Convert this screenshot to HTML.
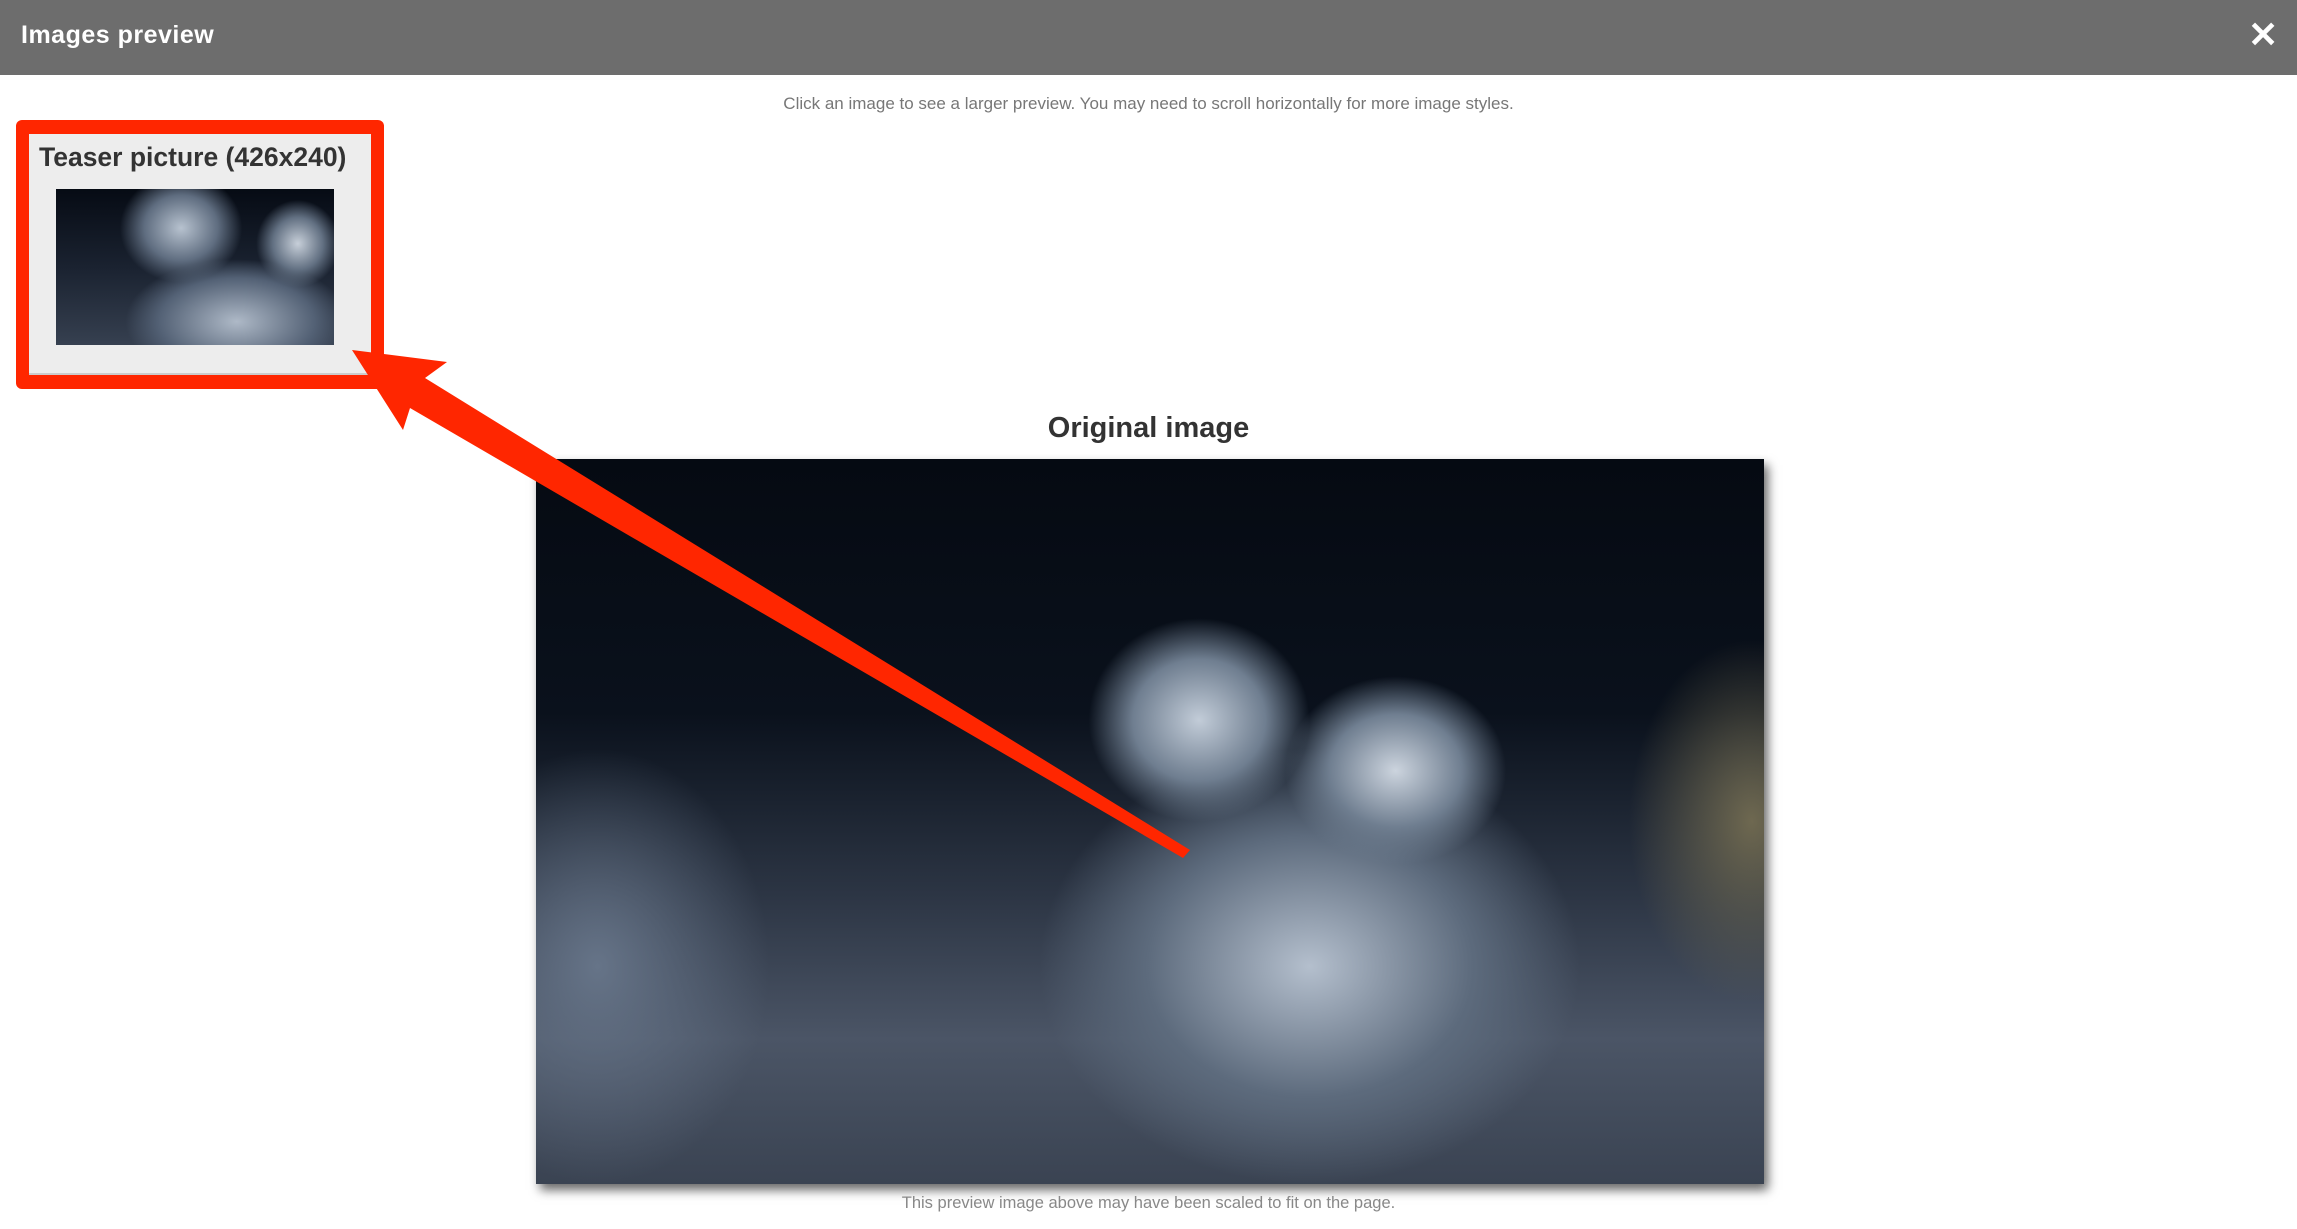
<!DOCTYPE html>
<html><head><meta charset="utf-8"><style>
html,body{margin:0;padding:0;width:2297px;height:1229px;overflow:hidden;background:#fff;font-family:"Liberation Sans",sans-serif;position:relative}
.hdr{position:absolute;left:0;top:0;width:2297px;height:75px;background:#6d6d6d}
.hdr .t{position:absolute;left:21px;top:21px;color:#fff;font-weight:bold;font-size:25px;letter-spacing:.5px}
.hdr .x{position:absolute;left:2248px;top:14px;color:#fff;font-weight:bold;font-size:36px}
.ins{position:absolute;top:94px;left:0;width:2297px;text-align:center;color:#777;font-size:17px}
.red{position:absolute;left:16px;top:120px;width:368px;height:269px;background:#ff2600;border-radius:6px}
.panel{position:absolute;left:29px;top:134px;width:342px;height:241px;background:#ededed;border-bottom:2px solid #ccc;box-sizing:border-box}
.panel .tt{position:absolute;left:10px;top:8px;font-size:26.5px;font-weight:bold;color:#333}
.img{background:
 radial-gradient(ellipse 9% 14% at 54% 36%,#c2ccd8 0,#6f7e90 60%,transparent 100%),
 radial-gradient(ellipse 9% 13% at 70% 43%,#ccd4de 0,#6f7e90 60%,transparent 100%),
 radial-gradient(ellipse 22% 30% at 63% 70%,#b4bfcd 0,#5d6b7d 60%,transparent 100%),
 radial-gradient(ellipse 10% 25% at 99% 50%,#6e6850 0,transparent 100%),
 radial-gradient(ellipse 14% 30% at 5% 70%,#667488 0,transparent 100%),
 linear-gradient(180deg,#050a12 0,#0a111c 35%,#2c3544 60%,#4b5566 80%,#3a4352 100%);}
.thumb{position:absolute;left:56px;top:189px;width:278px;height:156px;background:
 radial-gradient(ellipse 22% 35% at 45% 25%,#b7c2cf 0,#5f6d80 60%,transparent 100%),
 radial-gradient(ellipse 15% 28% at 87% 35%,#c7cfd9 0,#627082 60%,transparent 100%),
 radial-gradient(ellipse 40% 40% at 65% 85%,#aeb9c7 0,#536175 70%,transparent 100%),
 linear-gradient(180deg,#060b14 0,#1a2230 50%,#364050 100%)}
.orig{position:absolute;top:412px;left:0;width:2297px;text-align:center;font-size:29px;font-weight:bold;color:#333}
.big{position:absolute;left:536px;top:459px;width:1228px;height:725px;box-shadow:4px 6px 10px rgba(0,0,0,.6)}
.cap{position:absolute;top:1194px;left:0;width:2297px;text-align:center;color:#888;font-size:16.5px}
svg{position:absolute;left:0;top:0}
</style></head><body>
<div class="hdr"><div class="t">Images preview</div><div class="x">✕</div></div>
<div class="ins">Click an image to see a larger preview. You may need to scroll horizontally for more image styles.</div>
<div class="red"></div>
<div class="panel"><div class="tt">Teaser picture (426x240)</div></div>
<div class="thumb"></div>
<div class="orig">Original image</div>
<div class="big img"></div>
<div class="cap">This preview image above may have been scaled to fit on the page.</div>
<svg width="2297" height="1229"><polygon points="352,350 447,362 425,378 1190,850 1183,858 410,408 403,430" fill="#ff2600"/></svg>
</body></html>
